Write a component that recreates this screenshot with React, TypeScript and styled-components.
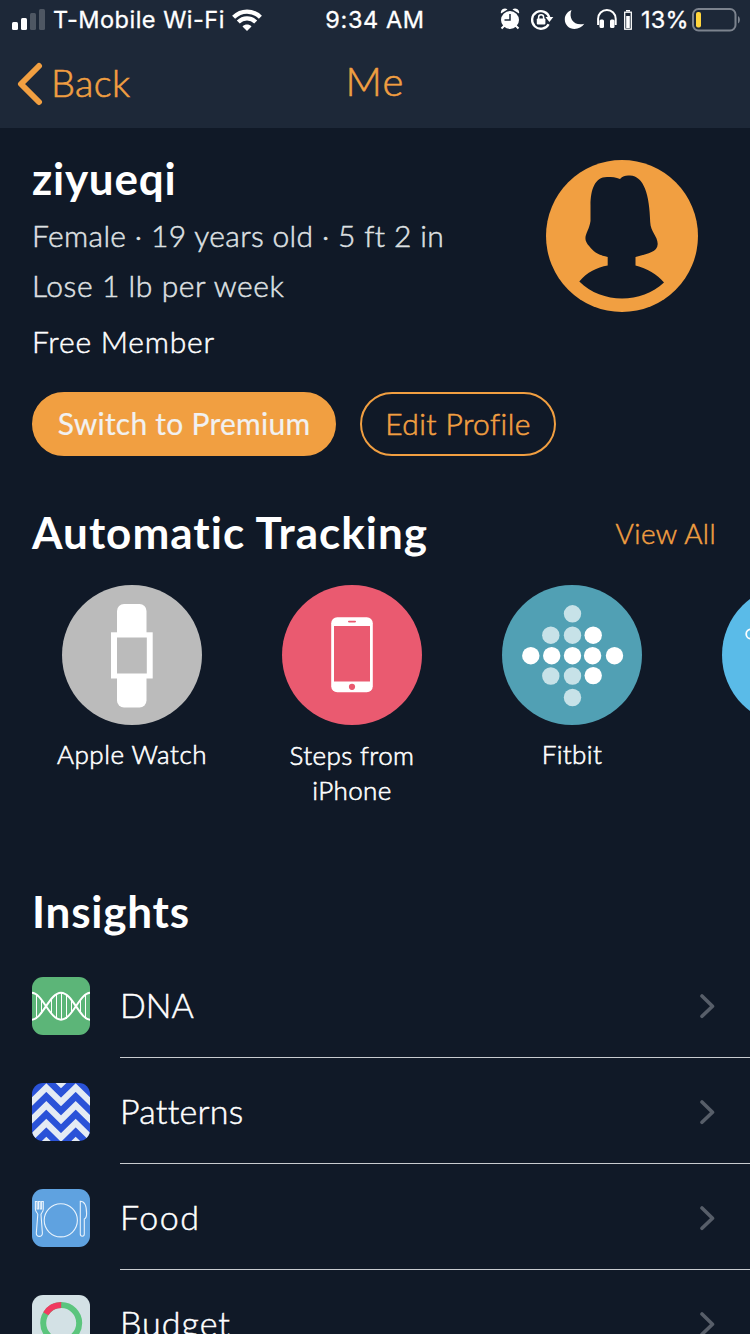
import React from "react";
import styled, { createGlobalStyle } from "styled-components";

const orange = "#f19f41";
const navy = "#101927";

const GlobalStyle = createGlobalStyle`
  *, *::before, *::after { box-sizing: border-box; }
  html, body { margin: 0; padding: 0; background: ${navy}; }
  body { overflow: hidden; font-family: Lato, "Liberation Sans", sans-serif; color: #fff; }
  svg { display: block; flex: none; }
  button, h1, h2, p { margin: 0; }
`;

const Screen = styled.div`
  width: 750px;
  height: 1334px;
  overflow: hidden;
  background: ${navy};
`;

const Header = styled.header`
  height: 128px;
  background: #1d2838;
`;

const StatusBar = styled.div`
  height: 40px;
  display: grid;
  grid-template-columns: 312px 126px 312px;
  align-items: center;
  font: 400 23.5px/40px Inter, sans-serif;
  -webkit-text-stroke: 0.3px currentColor;
  white-space: nowrap;
`;

const StatusLeft = styled.div`
  display: flex;
  align-items: center;
  padding-left: 12px;
`;

const StatusRight = styled.div`
  display: flex;
  align-items: center;
  padding-left: 62px;
`;

const StatusText = styled.span<{ $spacing?: number; $width: number; $gap?: number }>`
  width: ${(p) => p.$width}px;
  margin-left: ${(p) => p.$gap ?? 0}px;
  letter-spacing: ${(p) => p.$spacing ?? 0}px;
`;

const Clock = styled(StatusText)`
  justify-self: center;
  text-align: center;
`;

const NavBar = styled.nav`
  height: 88px;
  display: grid;
  grid-template-columns: 1fr auto 1fr;
  align-items: center;
  color: ${orange};
  font-weight: 300;
  -webkit-text-stroke: 0.6px currentColor;
`;

const BackButton = styled.button`
  display: flex;
  align-items: center;
  gap: 7px;
  padding: 0 0 0 16px;
  border: 0;
  background: none;
  color: inherit;
  font: 300 38px/84px Lato, sans-serif;
  letter-spacing: 0.3px;
`;

const BackLabel = styled.span`
  height: 88px;
`;

const NavTitle = styled.h1`
  font-size: 40px;
  line-height: 82px;
  height: 88px;
  font-weight: 300;
  letter-spacing: 1.2px;
`;

const Profile = styled.section`
  height: 264px;
  padding: 24px 52px 0 32px;
  display: flex;
  justify-content: space-between;
`;

const Heading = styled.h2<{ $spacing?: number }>`
  font-size: 44px;
  line-height: 53px;
  height: 52px;
  font-weight: 700;
  white-space: nowrap;
  letter-spacing: ${(p) => p.$spacing ?? 0}px;
`;

const Detail = styled.p<{ $top?: number; $spacing: number; $bright?: boolean }>`
  margin-top: ${(p) => p.$top ?? 0}px;
  font-size: 30px;
  line-height: 50px;
  font-weight: 300;
  -webkit-text-stroke: 0.5px currentColor;
  white-space: nowrap;
  color: ${(p) => (p.$bright ? "#fff" : "#dfe0e2")};
  letter-spacing: ${(p) => p.$spacing}px;
`;

const Avatar = styled.svg`
  margin-top: 8px;
`;

const Actions = styled.div`
  display: flex;
  gap: 24px;
  padding-left: 32px;
  height: 64px;
`;

const Pill = styled.button<{ $filled?: boolean; $width: number; $spacing: number }>`
  width: ${(p) => p.$width}px;
  height: 64px;
  padding: 0 0 2px;
  border: 2px solid ${orange};
  border-radius: 32px;
  background: ${(p) => (p.$filled ? orange : "transparent")};
  color: ${(p) => (p.$filled ? "#f1f1f1" : orange)};
  font: ${(p) => (p.$filled ? 400 : 300)} 30px/58px Lato, sans-serif;
  -webkit-text-stroke: ${(p) => (p.$filled ? 0.2 : 0.6)}px currentColor;
  letter-spacing: ${(p) => p.$spacing}px;
  white-space: nowrap;
`;

const Tracking = styled.section`
  height: 429px;
  padding-top: 50px;
`;

const SectionHead = styled.div`
  display: flex;
  justify-content: space-between;
  align-items: center;
  padding: 0 34px 0 32px;
`;

const ViewAll = styled.a`
  font-size: 28px;
  line-height: 55px;
  height: 52px;
  font-weight: 300;
  -webkit-text-stroke: 0.5px currentColor;
  color: ${orange};
  letter-spacing: 0.4px;
`;

const Sources = styled.div`
  display: flex;
  margin-top: 27px;
  padding-left: 22px;
  overflow: hidden;
`;

const Source = styled.div`
  flex: none;
  width: 220px;
  display: flex;
  flex-direction: column;
  align-items: center;
`;

const SourceLabel = styled.div<{ $spacing?: number; $top?: number }>`
  margin-top: ${(p) => p.$top ?? 12}px;
  font-size: 26px;
  line-height: 35px;
  font-weight: 300;
  -webkit-text-stroke: 0.6px currentColor;
  text-align: center;
  letter-spacing: ${(p) => p.$spacing ?? 0}px;
`;

const Insights = styled.section`
  & > ${Heading} { margin: 0 0 15px 32px; }
`;

const Row = styled.div`
  display: flex;
  height: 106px;
  padding-left: 32px;
  gap: 30px;
`;

const RowIcon = styled.svg`
  margin-top: 25px;
  border-radius: 11px;
`;

const RowBody = styled.div`
  flex: 1;
  display: flex;
  justify-content: space-between;
  padding-right: 35px;
  border-bottom: 1px solid #c8cbcf;
`;

const RowLabel = styled.span<{ $spacing: number }>`
  font-size: 34px;
  font-weight: 300;
  line-height: 106px;
  -webkit-text-stroke: 0.5px currentColor;
  letter-spacing: ${(p) => p.$spacing}px;
`;

const Chevron = styled.svg`
  margin-top: 41px;
`;

const Signal = () => (
  <svg width="34" height="22" viewBox="0 0 34 22" fill="#fff">
    <rect x="0" y="13" width="6" height="8" rx="1.5" />
    <rect x="9" y="9" width="6" height="12" rx="1.5" />
    <rect x="18" y="4" width="6" height="17" rx="1.5" opacity=".22" />
    <rect x="27" y="0" width="6" height="21" rx="1.5" opacity=".22" />
  </svg>
);

const Wifi = () => (
  <svg width="30" height="22" viewBox="0 0 30 22" fill="none" stroke="#fff" strokeWidth="4.2">
    <path d="M1.6 8.3C9.2 .6 20.8 .6 28.4 8.3" />
    <path d="M6.3 13.1c4.9-4.9 12.5-4.9 17.4 0" />
    <path d="M10.5 17.4c2.5-2.6 6.5-2.6 9 0L15 22z" fill="#fff" stroke="none" />
  </svg>
);

const StatusIcons = () => (
  <svg width="136" height="28" viewBox="500 6 136 28">
    <g fill="#fff">
      <circle cx="510" cy="20" r="9" />
      <path d="M501 13.5a4 4 0 0 1 6.5-4zM519 13.5a4 4 0 0 0-6.5-4z" />
      <path d="M504.500 25.500l-3 3M515.500 25.500l3 3" stroke="#fff" strokeWidth="2" />
    </g>
    <path d="M510 14v6h-5.500" fill="none" stroke="#1d2838" strokeWidth="1.500" />
    <path d="M548.600 24.200a8.800 8.800 0 1 1 .8-6.500" fill="none" stroke="#fff" strokeWidth="2.300" />
    <path d="M545.500 17h7.800l-3.900 5z" fill="#fff" />
    <rect x="536.800" y="18.500" width="8.600" height="6" rx="1" fill="#fff" />
    <path d="M538.600 19.500v-2.300a2.500 2.500 0 0 1 5 0v2.300" fill="none" stroke="#fff" strokeWidth="1.500" />
    <path d="M571.500 10C568 18.500 574.500 26.500 584.300 23.800C582 27 578.500 29 574.500 29C569 29 564.800 24.800 564.800 19.500C564.800 15 567.500 11.500 571.500 10Z" fill="#fff" />
    <path d="M598.100 25v-6.300a8.700 8.700 0 0 1 17.600 0V25" fill="none" stroke="#fff" strokeWidth="2" />
    <rect x="599.500" y="19.500" width="4.500" height="8.500" rx="1.500" fill="#fff" />
    <rect x="610" y="19.500" width="4.500" height="8.500" rx="1.500" fill="#fff" />
    <rect x="624.700" y="12.200" width="6.600" height="17" fill="none" stroke="#fff" strokeWidth="1.300" />
    <rect x="626" y="10" width="4" height="1.500" fill="#fff" />
    <rect x="626.200" y="16" width="3.600" height="12" fill="#fff" />
  </svg>
);

const Battery = () => (
  <svg width="48" height="24" viewBox="0 0 48 24">
    <rect x="1" y="1" width="42.500" height="21.500" rx="5.500" fill="none" stroke="#7c838e" strokeWidth="2" />
    <path d="M46 8c2.500 1.500 2.500 6 0 7.500z" fill="#7c838e" />
    <rect x="4" y="4" width="5" height="15.500" rx="2" fill="#ffd53d" />
  </svg>
);

const Silhouette = () => (
  <Avatar width="152" height="152" viewBox="0 0 152 152">
    <circle cx="76" cy="76" r="76" fill={orange} />
    <path
      fill={navy}
      d="M74 19C77 15.500 80 15.300 84 15.500C98 16 103.500 35 104.200 62C104.500 72 111.700 76 111.700 84C111.500 93 99 94 89.500 97V105.500C101 108.500 111 114 118 122.500C95 144 56 144 33.300 121.500C41 112 51 107.500 61.700 105.500V97C53 95 48 92.500 43.500 86.500C34.500 77 43 73 44.500 61V45C44.700 30 48.500 17 61 17C66 17 70 17.300 74 19Z"
    />
  </Avatar>
);

const WatchIcon = () => (
  <svg width="140" height="140" viewBox="0 0 140 140">
    <circle cx="70" cy="70" r="70" fill="#bbb" />
    <rect x="55" y="19" width="29.500" height="103.500" rx="7" fill="#fff" />
    <rect x="49" y="47.300" width="41.700" height="46.200" fill="#fff" />
    <rect x="55" y="52.500" width="29.800" height="36" fill="#bbb" />
  </svg>
);

const PhoneIcon = () => (
  <svg width="140" height="140" viewBox="0 0 140 140">
    <circle cx="70" cy="70" r="70" fill="#ea5a70" />
    <rect x="49.200" y="32.300" width="41.600" height="75" rx="6" fill="#fff" />
    <rect x="52" y="41" width="36" height="55.500" fill="#ea5a70" />
    <rect x="66" y="35.700" width="8" height="1.700" rx=".8" fill="#ea5a70" />
    <circle cx="70" cy="101.800" r="3.100" fill="#ea5a70" />
  </svg>
);

const brightDots = [[28.8, 70.7], [49.7, 70.7], [70.5, 70.7], [90.6, 70.7], [112.5, 70.7], [91.2, 50.2], [91.2, 90.6]];
const dimDots = [[70.5, 28.8], [48.8, 50.2], [70.5, 50.2], [48.8, 91], [70.5, 91], [70.5, 112.5]];

const FitbitIcon = () => (
  <svg width="140" height="140" viewBox="0 0 140 140">
    <circle cx="70" cy="70" r="70" fill="#51a0b4" />
    {brightDots.map(([x, y]) => <circle key={`${x}-${y}`} cx={x} cy={y} r="8.7" fill="#fff" />)}
    {dimDots.map(([x, y]) => <circle key={`${x}-${y}`} cx={x} cy={y} r="8.7" fill="#c7e2e8" />)}
  </svg>
);

const PartialIcon = () => (
  <svg width="140" height="140" viewBox="0 0 140 140">
    <circle cx="70" cy="70" r="70" fill="#5abbe8" />
    <circle cx="29" cy="49" r="4.800" fill="none" stroke="#fff" strokeWidth="1.800" />
  </svg>
);

const DnaIcon = () => (
  <RowIcon width="58" height="58" viewBox="0 0 58 58">
    <rect width="58" height="58" fill="#5cb578" />
    <g fill="none" stroke="#fff">
      <path strokeWidth="1" d="M4.500 17v25M9.500 22v15M19.500 22v14M24.500 17v25M29.500 16v27M34.500 17v25M39.500 23v13M48.500 23v13M53.500 17v25" />
      <path strokeWidth="2" d="M-.5 15.700C10.500 15.700 17.500 42.700 29 42.700S47.500 15.700 58.500 15.700" />
      <path strokeWidth="2" d="M-.5 42.700C10.500 42.700 17.500 15.700 29 15.700S47.500 42.700 58.500 42.700" />
    </g>
  </RowIcon>
);

const PatternsIcon = () => (
  <RowIcon width="58" height="58" viewBox="0 0 58 58">
    <rect width="58" height="58" fill="#2a52d8" />
    <g fill="none" stroke="#e4ebf4" strokeWidth="6.200">
      {[-13.5, 4.5, 22.3, 40, 58].map((y) => (
        <path key={y} d={`M-2 ${y + 16}L14.300 ${y}L29 ${y + 14.5}L43.700 ${y}L60 ${y + 16}`} />
      ))}
    </g>
  </RowIcon>
);

const FoodIcon = () => (
  <RowIcon width="58" height="58" viewBox="0 0 58 58">
    <rect width="58" height="58" fill="#5fa2e0" />
    <g fill="none" stroke="#e9f3fc" strokeWidth="1.100">
      <circle cx="28.800" cy="31.300" r="16.600" />
      <path d="M3.400 12.500V20c0 3 2.400 4 2.400 5.500L4.300 44c-.2 4.500 6.300 4.500 6.100 0L9 25.500c0-1.500 2.300-2.500 2.300-5.500v-7.500h-1.700V20H8.200v-7.500H6.500V20H5.100v-7.500z" />
      <path d="M48.300 12.200c4.500 0 6.300 6 6.300 12.500 0 3-.7 4.500-2.300 5.300V45c0 3-4 3-4 0z" />
    </g>
  </RowIcon>
);

const BudgetIcon = () => (
  <RowIcon width="58" height="58" viewBox="0 0 58 58">
    <rect width="58" height="58" fill="#d3e1e5" />
    <circle cx="29.200" cy="28" r="18" fill="none" stroke="#5bc57d" strokeWidth="6" />
    <path d="M13.800 18.700A18 18 0 0 1 29.200 10" fill="none" stroke="#f03a5f" strokeWidth="6" />
  </RowIcon>
);

const insights = [
  { label: "DNA", spacing: 0, Icon: DnaIcon },
  { label: "Patterns", spacing: 0.25, Icon: PatternsIcon },
  { label: "Food", spacing: 1.5, Icon: FoodIcon },
  { label: "Budget", spacing: 1, Icon: BudgetIcon },
];

export default function App() {
  return (
    <Screen>
      <GlobalStyle />
      <Header>
        <StatusBar>
          <StatusLeft>
            <Signal />
            <StatusText $width={179} $gap={7} $spacing={0.5}>T-Mobile Wi-Fi</StatusText>
            <Wifi />
          </StatusLeft>
          <Clock $width={110} $spacing={0.6}>9:34 AM</Clock>
          <StatusRight>
            <StatusIcons />
            <StatusText $width={51} $gap={5} $spacing={0.2}>13%</StatusText>
            <Battery />
          </StatusRight>
        </StatusBar>
        <NavBar>
          <BackButton>
            <svg width="28" height="44" viewBox="0 0 28 44" fill="none" stroke={orange} strokeWidth="6" strokeLinecap="round" strokeLinejoin="round">
              <path d="M23 4L5 22l18 18" />
            </svg>
            <BackLabel>Back</BackLabel>
          </BackButton>
          <NavTitle>Me</NavTitle>
          <span />
        </NavBar>
      </Header>

      <Profile>
        <div>
          <Heading $spacing={0.75}>ziyueqi</Heading>
          <Detail $top={6} $spacing={0.35}>Female · 19 years old · 5 ft 2 in</Detail>
          <Detail $spacing={0.58}>Lose 1 lb per week</Detail>
          <Detail $top={6} $spacing={0.8} $bright>Free Member</Detail>
        </div>
        <Silhouette />
      </Profile>
      <Actions>
        <Pill $filled $width={304} $spacing={0.25}>Switch to Premium</Pill>
        <Pill $width={196} $spacing={0.4}>Edit Profile</Pill>
      </Actions>

      <Tracking>
        <SectionHead>
          <Heading $spacing={1.02}>Automatic Tracking</Heading>
          <ViewAll>View All</ViewAll>
        </SectionHead>
        <Sources>
          <Source>
            <WatchIcon />
            <SourceLabel $spacing={0.5}>Apple Watch</SourceLabel>
          </Source>
          <Source>
            <PhoneIcon />
            <SourceLabel $top={13} $spacing={0.4}>Steps from<br />iPhone</SourceLabel>
          </Source>
          <Source>
            <FitbitIcon />
            <SourceLabel $spacing={0.4}>Fitbit</SourceLabel>
          </Source>
          <Source>
            <PartialIcon />
          </Source>
        </Sources>
      </Tracking>

      <Insights>
        <Heading $spacing={0.8}>Insights</Heading>
        {insights.map(({ label, spacing, Icon }) => (
          <Row key={label}>
            <Icon />
            <RowBody>
              <RowLabel $spacing={spacing}>{label}</RowLabel>
              <Chevron width="16" height="26" viewBox="0 0 16 26" fill="none" stroke="#575e69" strokeWidth="3.600" strokeLinecap="round" strokeLinejoin="round">
                <path d="M3 3l10.500 10.200L3 23.300" />
              </Chevron>
            </RowBody>
          </Row>
        ))}
      </Insights>
    </Screen>
  );
}
